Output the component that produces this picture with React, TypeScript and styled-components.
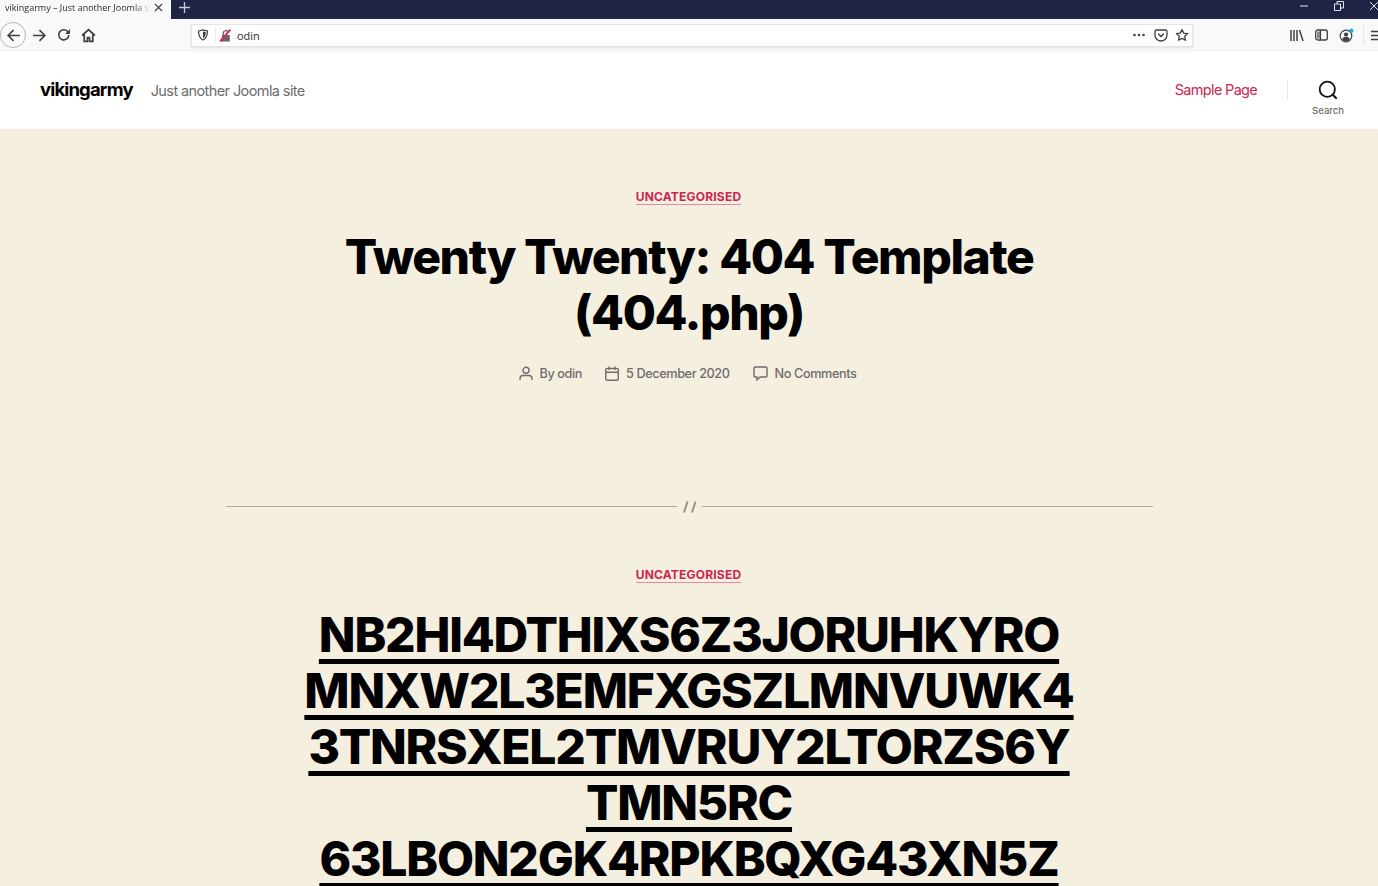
import React from "react";
import styled, { createGlobalStyle } from "styled-components";

const Global = createGlobalStyle`
  html, body { margin: 0; padding: 0; height: 886px; overflow: hidden; background: #f5efe0; }
  body { font-family: Inter, "Liberation Sans", sans-serif; }
  #root { height: 886px; overflow: hidden; }
`;

const Page = styled.div`
  width: 1378px;
  height: 886px;
  overflow: hidden;
  display: flex;
  flex-direction: column;
`;

const TabStrip = styled.div`
  height: 19px;
  background: #1f2344;
  display: flex;
  align-items: stretch;
  flex: none;
`;

const ActiveTab = styled.div`
  width: 171px;
  background: #f9f9fa;
  display: flex;
  align-items: center;
  padding: 0 8px 4px 5px;
  box-sizing: border-box;
  gap: 3px;
`;

const TabTitle = styled.span`
  flex: 1;
  font-size: 9px;
  color: #2a2a2e;
  white-space: nowrap;
  overflow: hidden;
  font-family: "Open Sans", sans-serif;
  -webkit-mask-image: linear-gradient(to right, #000 88%, transparent);
  mask-image: linear-gradient(to right, #000 88%, transparent);
`;

const NewTab = styled.div`
  width: 26px;
  display: flex;
  align-items: center;
  justify-content: center;
  padding-bottom: 5px;
`;

const WindowControls = styled.div`
  margin-left: auto;
  display: flex;
  align-items: center;
  gap: 25px;
  padding-bottom: 7px;
  margin-right: -1px;
`;

const NavBar = styled.div`
  height: 32px;
  background: #f9f9fa;
  display: flex;
  align-items: center;
  flex: none;
  padding-top: 1px;
  border-bottom: 1px solid #f0f0f0;
  box-sizing: border-box;
`;

const NavGroup = styled.div`
  display: flex;
  align-items: center;
  width: 191px;
  flex: none;
  box-sizing: border-box;
`;

const BackCircle = styled.div`
  width: 26px;
  height: 26px;
  border-radius: 50%;
  border: 1px solid #b5b5b8;
  background: #fcfcfc;
  box-sizing: border-box;
  display: flex;
  align-items: center;
  justify-content: center;
`;

const NavIcon = styled.div<{ $ml?: number }>`
  margin-left: ${(p) => p.$ml ?? 0}px;
  display: flex;
  align-items: center;
  justify-content: center;
  width: 16px;
  height: 16px;
`;

const UrlBar = styled.div`
  width: 1002px;
  height: 23px;
  background: #fff;
  border: 1px solid #e4e4e6;
  box-shadow: 0 1px 2px rgba(0, 0, 0, 0.1);
  box-sizing: border-box;
  display: flex;
  align-items: center;
  padding: 0 3px 0 5px;
  flex: none;
`;

const UrlDivider = styled.div`
  width: 1px;
  height: 16px;
  background: #ececec;
  margin: 0 3px 0 6px;
`;

const UrlText = styled.span`
  font-family: "Open Sans", sans-serif;
  font-size: 11px;
  color: #2a2a2e;
  margin-left: 5px;
  flex: 1;
`;

const UrlActions = styled.div`
  display: flex;
  align-items: center;
  gap: 7px;
`;

const ToolIcons = styled.div`
  display: flex;
  align-items: center;
  flex: 1;
  justify-content: flex-end;
  gap: 11px;
  margin-right: -3px;
`;

const ToolSep = styled.div`
  width: 1px;
  height: 20px;
  background: #e6e6e6;
  margin-left: -2px;
  margin-right: -4px;
`;

const SiteHeader = styled.header`
  height: 78px;
  background: #fff;
  flex: none;
  display: flex;
  align-items: center;
  padding: 0 34px 0 40px;
  box-sizing: border-box;
`;

const SiteTitle = styled.span`
  font-size: 18.5px;
  font-weight: 700;
  letter-spacing: -0.85px;
  color: #000;
  margin-bottom: 2px;
`;

const SiteTagline = styled.span`
  font-size: 14.5px;
  color: #6d6d6d;
  margin-left: 18px;
  letter-spacing: -0.6px;
`;

const HeaderRight = styled.div`
  margin-left: auto;
  display: flex;
  align-items: center;
`;

const MenuLink = styled.a`
  font-size: 14.5px;
  color: #cd2653;
  letter-spacing: -0.68px;
  margin-bottom: 2px;
`;

const HeaderSep = styled.div`
  width: 1px;
  height: 20px;
  background: #ede8da;
  margin: 0 24px 0 30px;
`;

const SearchToggle = styled.div`
  display: flex;
  flex-direction: column;
  align-items: center;
  gap: 5px;
  padding-top: 15px;
`;

const SearchLabel = styled.span`
  font-size: 9.5px;
  font-weight: 500;
  color: #6d6d6d;
`;

const Main = styled.main`
  flex: 1;
  background: #f5efe0;
  display: flex;
  flex-direction: column;
  align-items: center;
  min-height: 0;
  overflow: hidden;
  & > * {
    flex: none;
  }
`;

const Category = styled.a<{ $mt: number }>`
  margin-top: ${(p) => p.$mt}px;
  margin-right: 1px;
  font-size: 12px;
  line-height: 15px;
  font-weight: 700;
  letter-spacing: 0.2px;
  color: #cd2653;
  border-bottom: 1px solid #e58aa2;
`;

const Title = styled.h1`
  margin: 24px 0 0;
  width: 900px;
  text-align: center;
  font-size: 48px;
  line-height: 56px;
  font-weight: 800;
  letter-spacing: -1.4px;
  color: #000;
`;

const Meta = styled.div`
  margin: 23px 3px 0 0;
  display: flex;
  align-items: center;
  font-size: 12.7px;
  font-weight: 500;
  color: #6d6d6d;
  letter-spacing: -0.4px;
  height: 18px;
`;

const MetaItem = styled.span<{ $ml?: number }>`
  display: flex;
  align-items: center;
  gap: 7px;
  margin-left: ${(p) => p.$ml ?? 0}px;
`;

const Divider = styled.div`
  margin-top: 118px;
  width: 927px;
  display: flex;
  align-items: center;
  gap: 6px;
  height: 13px;
`;

const DividerLine = styled.div`
  flex: 1;
  height: 1px;
  background: #aeab9f;
`;

const Slashes = styled.div`
  width: 13px;
  height: 12px;
  display: flex;
`;

const LinkTitle = styled.h2`
  margin: 24px 0 0;
  text-align: center;
  font-size: 48px;
  line-height: 56px;
  font-weight: 800;
  letter-spacing: -1.2px;
  color: #000;
  white-space: nowrap;
  text-decoration: underline;
  text-decoration-thickness: 5px;
  text-underline-offset: 7px;
  text-decoration-skip-ink: none;
`;

const Icon = styled.svg`
  display: block;
  flex: none;
`;

const ic = "#3f3f44";

export default function App() {
  return (
    <Page>
      <Global />
      <TabStrip>
        <ActiveTab>
          <TabTitle>vikingarmy – Just another Joomla site</TabTitle>
          <Icon width="9" height="9" viewBox="0 0 9 9">
            <path d="M1 1l7 7M8 1L1 8" stroke={ic} strokeWidth="1.1" />
          </Icon>
        </ActiveTab>
        <NewTab>
          <Icon width="11" height="11" viewBox="0 0 11 11">
            <path d="M5.5 0v11M0 5.5h11" stroke="#c8c9d4" strokeWidth="1.3" />
          </Icon>
        </NewTab>
        <WindowControls>
          <Icon width="10" height="10" viewBox="0 0 10 10">
            <path d="M1 5h8" stroke="#e4e5ec" strokeWidth="1" />
          </Icon>
          <Icon width="10" height="10" viewBox="0 0 10 10">
            <path d="M.5 3h6v6.5h-6zM3 3V.5h6.5V7H7" fill="none" stroke="#e4e5ec" strokeWidth="1" />
          </Icon>
          <Icon width="10" height="10" viewBox="0 0 10 10">
            <path d="M1 1l8 8M9 1L1 9" stroke="#e4e5ec" strokeWidth="1" />
          </Icon>
        </WindowControls>
      </TabStrip>
      <NavBar>
        <NavGroup>
          <BackCircle>
            <Icon width="15" height="15" viewBox="0 0 14 14">
              <path d="M13 7H2M7 2L2 7l5 5" fill="none" stroke={ic} strokeWidth="1.5" />
            </Icon>
          </BackCircle>
          <NavIcon $ml={5}>
            <Icon width="15" height="15" viewBox="0 0 14 14">
              <path d="M1 7h11M7 2l5 5-5 5" fill="none" stroke={ic} strokeWidth="1.5" />
            </Icon>
          </NavIcon>
          <NavIcon $ml={9}>
            <Icon width="14" height="14" viewBox="0 0 13 13">
              <path d="M11 6.5A4.7 4.7 0 1 1 9.6 3L11.5 5" fill="none" stroke={ic} strokeWidth="1.5" />
              <path d="M12 1v4.5H7.5z" fill={ic} />
            </Icon>
          </NavIcon>
          <NavIcon $ml={8}>
            <Icon width="15" height="15" viewBox="0 0 14 14">
              <path d="M1 7l6-5.5L13 7M3 6v6.5h3V9h2v3.5h3V6" fill="none" stroke={ic} strokeWidth="1.6" />
            </Icon>
          </NavIcon>
        </NavGroup>
        <UrlBar>
          <Icon width="12" height="12" viewBox="0 0 12 12">
            <path d="M1.5 2 6 .9 10.5 2c0 4.5-1.5 7.5-4.5 9C3 9.500 1.500 6.500 1.500 2z" fill="none" stroke={ic} strokeWidth="1.2" />
            <path d="M6 2.500 8.800 3C8.800 6 8 8 6 9.200z" fill={ic} />
          </Icon>
          <UrlDivider />
          <Icon width="13" height="13" viewBox="0 0 12 12">
            <path d="M3 5.500h7v6H2z" fill="#666" />
            <path d="M4 5.500V3.500a2.200 2.200 0 0 1 4.200-.8" fill="none" stroke="#666" strokeWidth="1.300" />
            <path d="M1 11.500 10.500.5" stroke="#e22850" strokeWidth="1.800" />
          </Icon>
          <UrlText>odin</UrlText>
          <UrlActions>
            <Icon width="15" height="6" viewBox="0 0 15 6">
              <circle cx="2.500" cy="3" r="1.300" fill={ic} />
              <circle cx="7" cy="3" r="1.300" fill={ic} />
              <circle cx="11.500" cy="3" r="1.300" fill={ic} />
            </Icon>
            <Icon width="14" height="13" viewBox="0 0 14 13">
              <path d="M1 2.500C1 1.500 1.500 1 2.500 1h9c1 0 1.500.5 1.500 1.500V6a6 6 0 0 1-12 0z" fill="none" stroke={ic} strokeWidth="1.300" />
              <path d="M4.200 4.800 7 7.500l2.800-2.700" fill="none" stroke={ic} strokeWidth="1.500" />
            </Icon>
            <Icon width="14" height="14" viewBox="0 0 24 24">
              <path d="M12 2.500l2.900 6.300 6.800.8-5 4.700 1.300 6.800-6-3.400-6 3.400 1.300-6.800-5-4.700 6.800-.8z" fill="none" stroke={ic} strokeWidth="2.200" strokeLinejoin="round" />
            </Icon>
          </UrlActions>
        </UrlBar>
        <ToolIcons>
          <Icon width="14" height="13" viewBox="0 0 14 13">
            <path d="M1 1v11M4 1v11M7 1v11M9.500 1l3.500 11" stroke={ic} strokeWidth="1.500" />
          </Icon>
          <Icon width="13" height="12" viewBox="0 0 13 12">
            <rect x=".7" y="1" width="11.600" height="10" rx="2" fill="none" stroke={ic} strokeWidth="1.300" />
            <path d="M2 2.500h3.500v7H2z" fill={ic} opacity=".6" />
            <path d="M5.500 1v10" stroke={ic} strokeWidth="1.200" />
          </Icon>
          <Icon width="15" height="15" viewBox="0 0 15 15">
            <circle cx="7" cy="8" r="5.800" fill="none" stroke={ic} strokeWidth="1.200" />
            <circle cx="7" cy="6.500" r="2.100" fill={ic} />
            <path d="M3 11.500c.8-2 2.200-2.700 4-2.700s3.200.7 4 2.700a5.500 5.500 0 0 1-8 0z" fill={ic} />
            <circle cx="12.300" cy="2.700" r="2.200" fill="#21a9ee" />
          </Icon>
          <ToolSep />
          <Icon width="10" height="11" viewBox="0 0 10 11">
            <path d="M0 1.500h10M0 5.500h10M0 9.500h10" stroke={ic} strokeWidth="1.400" />
          </Icon>
        </ToolIcons>
      </NavBar>
      <SiteHeader>
        <SiteTitle>vikingarmy</SiteTitle>
        <SiteTagline>Just another Joomla site</SiteTagline>
        <HeaderRight>
          <MenuLink>Sample Page</MenuLink>
          <HeaderSep />
          <SearchToggle>
            <Icon width="20" height="20" viewBox="0 0 20 20">
              <circle cx="9.300" cy="9.300" r="7.600" fill="none" stroke="#111" strokeWidth="1.800" />
              <path d="M14.700 14.700l4 4" stroke="#111" strokeWidth="2" />
            </Icon>
            <SearchLabel>Search</SearchLabel>
          </SearchToggle>
        </HeaderRight>
      </SiteHeader>
      <Main>
        <Category $mt={60}>UNCATEGORISED</Category>
        <Title>
          Twenty Twenty: 404 Template
          <br />
          (404.php)
        </Title>
        <Meta>
          <MetaItem>
            <Icon width="14" height="15" viewBox="0 0 14 15">
              <circle cx="7" cy="4.300" r="3" fill="none" stroke="#6d6d6d" strokeWidth="1.400" />
              <path d="M1 14v-1.500c0-2 1.500-3 3-3h6c1.500 0 3 1 3 3V14" fill="none" stroke="#6d6d6d" strokeWidth="1.400" />
            </Icon>
            By odin
          </MetaItem>
          <MetaItem $ml={23}>
            <Icon width="14" height="15" viewBox="0 0 14 15">
              <rect x=".7" y="2.500" width="12.600" height="11.800" rx="1.500" fill="none" stroke="#6d6d6d" strokeWidth="1.400" />
              <path d="M.7 6.300h12.600M4 .5v3.500M10 .5v3.500" stroke="#6d6d6d" strokeWidth="1.400" />
            </Icon>
            5 December 2020
          </MetaItem>
          <MetaItem $ml={23}>
            <Icon width="15" height="15" viewBox="0 0 15 15">
              <path d="M2.200 1h10.600c.7 0 1.200.5 1.200 1.200v7.600c0 .7-.5 1.200-1.200 1.200H7l-3 3v-3H2.200C1.500 11 1 10.500 1 9.800V2.200C1 1.500 1.500 1 2.200 1z" fill="none" stroke="#6d6d6d" strokeWidth="1.400" />
            </Icon>
            No Comments
          </MetaItem>
        </Meta>
        <Divider>
          <DividerLine />
          <Slashes>
            <Icon width="13" height="12" viewBox="0 0 13 12">
              <path d="M4.500 0.500 1 11.500M12.500 0.500 9 11.500" stroke="#8f8f88" strokeWidth="1.900" />
            </Icon>
          </Slashes>
          <DividerLine />
        </Divider>
        <Category $mt={54}>UNCATEGORISED</Category>
        <LinkTitle>
          NB2HI4DTHIXS6Z3JORUHKYRO
          <br />
          MNXW2L3EMFXGSZLMNVUWK4
          <br />
          3TNRSXEL2TMVRUY2LTORZS6Y
          <br />
          TMN5RC
          <br />
          63LBON2GK4RPKBQXG43XN5Z
        </LinkTitle>
      </Main>
    </Page>
  );
}
